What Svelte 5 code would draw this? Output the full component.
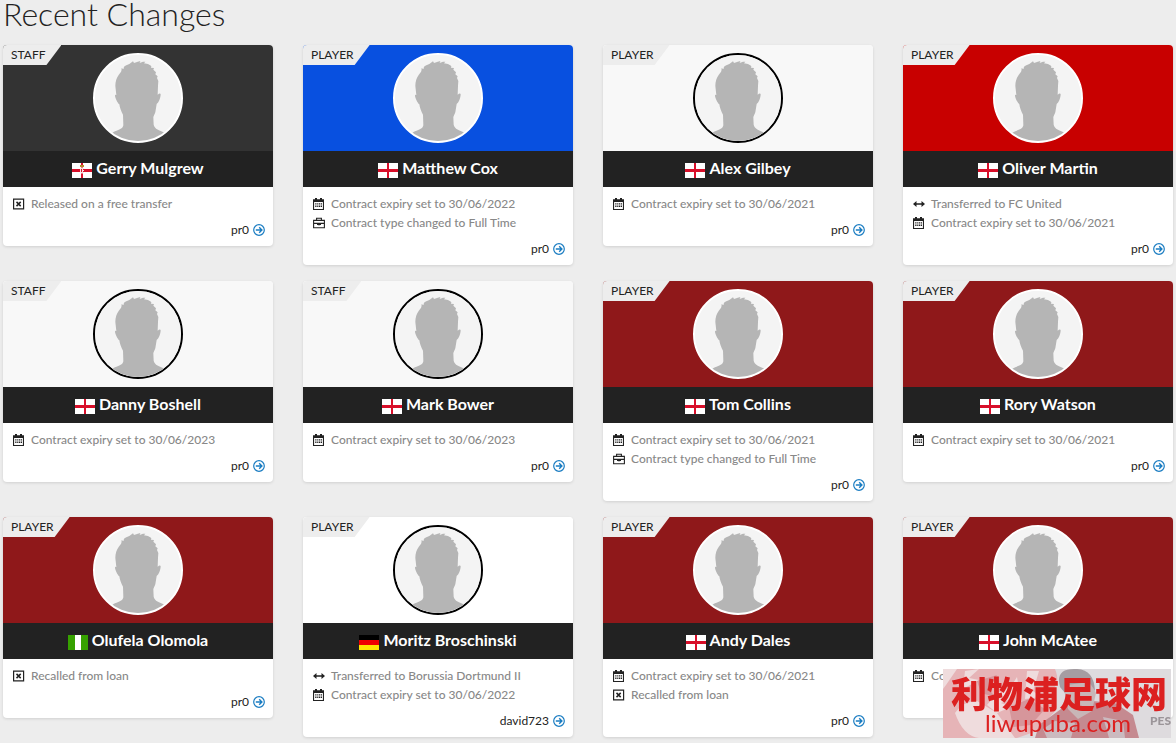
<script>
  const cards = [
    { role: 'Staff', name: 'Gerry Mulgrew', flag: 'nir', color: '#333333', user: 'pr0', changes: [['box', 'Released on a free transfer']] },
    { role: 'Player', name: 'Matthew Cox', flag: 'eng', color: '#0850e0', user: 'pr0', changes: [['calendar', 'Contract expiry set to 30/06/2022'], ['case', 'Contract type changed to Full Time']] },
    { role: 'Player', name: 'Alex Gilbey', flag: 'eng', color: '#f8f8f8', light: true, user: 'pr0', changes: [['calendar', 'Contract expiry set to 30/06/2021']] },
    { role: 'Player', name: 'Oliver Martin', flag: 'eng', color: '#c80000', user: 'pr0', changes: [['arrows', 'Transferred to FC United'], ['calendar', 'Contract expiry set to 30/06/2021']] },
    { role: 'Staff', name: 'Danny Boshell', flag: 'eng', color: '#f8f8f8', light: true, user: 'pr0', changes: [['calendar', 'Contract expiry set to 30/06/2023']] },
    { role: 'Staff', name: 'Mark Bower', flag: 'eng', color: '#f8f8f8', light: true, user: 'pr0', changes: [['calendar', 'Contract expiry set to 30/06/2023']] },
    { role: 'Player', name: 'Tom Collins', flag: 'eng', color: '#8f181a', user: 'pr0', changes: [['calendar', 'Contract expiry set to 30/06/2021'], ['case', 'Contract type changed to Full Time']] },
    { role: 'Player', name: 'Rory Watson', flag: 'eng', color: '#8f181a', user: 'pr0', changes: [['calendar', 'Contract expiry set to 30/06/2021']] },
    { role: 'Player', name: 'Olufela Olomola', flag: 'nga', color: '#8f181a', user: 'pr0', changes: [['box', 'Recalled from loan']] },
    { role: 'Player', name: 'Moritz Broschinski', flag: 'ger', color: '#ffffff', light: true, user: 'david723', changes: [['arrows', 'Transferred to Borussia Dortmund II'], ['calendar', 'Contract expiry set to 30/06/2022']] },
    { role: 'Player', name: 'Andy Dales', flag: 'eng', color: '#8f181a', user: 'pr0', changes: [['calendar', 'Contract expiry set to 30/06/2021'], ['box', 'Recalled from loan']] },
    { role: 'Player', name: 'John McAtee', flag: 'eng', color: '#8f181a', user: 'pr0', changes: [['calendar', 'Contract expiry set to 30/06/2021']] }
  ];
</script>

{#snippet flagIcon(kind)}
  <svg class="flag" viewBox="0 0 20 15" aria-hidden="true">
    {#if kind === 'ger'}
      <path fill="#000" d="M0 0h20v5H0z" /><path fill="#f00000" d="M0 5h20v5H0z" /><path fill="#ffe600" d="M0 10h20v5H0z" />
    {:else if kind === 'nga'}
      <path fill="#36a100" d="M0 0h20v15H0z" /><path fill="#fff" d="M7 0h6v15H7z" />
    {:else}
      <path fill="#fff" d="M0 0h20v15H0z" />
      <path fill="#d80f2a" d="M9 0h2v15H9zM0 6h20v3H0z" />
      {#if kind === 'nir'}
        <path fill="#f7dede" d="M10 4l2 2v3l-2 2-2-2V6z" />
        <path fill="#d80f2a" d="M9 6h1v3H9zM11 6h1v1h-1zM11 8h1v1h-1z" />
        <path fill="#b58a2c" d="M8 2h4v2H8z" />
      {/if}
    {/if}
  </svg>
{/snippet}

{#snippet changeIcon(kind)}
  <svg class="icon" viewBox="0 0 12 12" aria-hidden="true">
    {#if kind === 'box'}
      <path fill="none" stroke="#222" stroke-width="1.2" d="M.6 1.1h10v9.800H.6z" />
      <path fill="none" stroke="#222" stroke-width="1.5" d="M3.500 3.900l4.200 4.200M7.700 3.900L3.500 8.100" />
    {:else if kind === 'calendar'}
      <path fill="#222" fill-rule="evenodd" d="M2 0h2v1.200h3V0h2v1.200h2V12H0V1.200h2zM1.100 4.100v6.800h8.800V4.100z" />
      <path fill="#222" d="M2.200 5.200h1.300v1.400H2.200zM4.200 5.200h1.200v1.400H4.200zM6 5.200h1.200v1.400H6zM7.800 5.200H9v1.400H7.800zM2.200 7.600h1.300v1.300H2.200zM4.200 7.600h1.200v1.300H4.200zM6 7.600h1.200v1.300H6zM7.800 7.600H9v1.300H7.800z" />
    {:else if kind === 'case'}
      <path fill="none" stroke="#222" stroke-width="1.1" d="M3.600 3.200V1.200h4.800v2M.6 3.400h10.800v7.400H.6zM.6 6.400h10.800" />
      <path fill="#222" d="M4 6h4v1.200L7 8.200H5L4 7.200z" />
    {:else}
      <path fill="#222" d="M0 6l3.500-3v2.200h5V3L12 6 8.500 9V6.800h-5V9z" />
    {/if}
  </svg>
{/snippet}

<main>
  <h1>Recent Changes</h1>
  <div class="grid">
    {#each cards as card}
      <article class="card">
        <div class="banner" style="background-color: {card.color}">
          <span class="role">{card.role}</span>
          <svg class="avatar" class:dark={card.light} viewBox="6 6 258 258" aria-hidden="true">
            <circle cx="135" cy="135" r="134" fill="#f4f4f4" />
            <path fill="#b5b5b5" d="M58 239C76 230 89 229 91 217L90 185C85 177 80 163 79 154C73 149 66 133 66 128Q66 123 70 126L67 99C67 85 71 74 77 66C81 60 88 56 85 46L92 48C91 42 96 38 100 37L109 33L120 25L123 30L132 27L142 24L140 30L150 26L157 26L153 31L165 33L175 39L174 44L183 45L181 50L189 58L187 64L194 70L192 75L196 84L195 99L194 125Q202 118 203 124C203 134 197 150 191 153L187 178L181 192L182 215C185 229 199 231 214 239L190 260Q135 285 79 260Z" />
          </svg>
        </div>
        <h2>{@render flagIcon(card.flag)}{card.name}</h2>
        <div class="body">
          <ul>
            {#each card.changes as [icon, text]}
              <li>{@render changeIcon(icon)}<span>{text}</span></li>
            {/each}
          </ul>
          <a class="user" href="#changes">
            {card.user}
            <svg class="icon" viewBox="0 0 12 12" aria-hidden="true">
              <g fill="none" stroke="#1b7dc2" stroke-width="1.2"><circle cx="6" cy="6" r="5.3" /><path stroke-width="1.400" d="M2.800 6h6M6.200 3.300L8.900 6 6.200 8.700" /></g>
            </svg>
          </a>
        </div>
      </article>
    {/each}
  </div>
</main>

<a class="stamp" href="#home">
  <svg class="scene" viewBox="0 0 228 69" preserveAspectRatio="none" aria-hidden="true">
    <path fill="#dedbde" d="M0 0h228v69H0z" />
    <path fill="#e6b4b7" d="M0 0h112q6 14-4 22l6 18-20 22-20 7H0z" />
    <path fill="#efdcdd" d="M0 0h14L3 16l-3 4zM22 2l14-2-10 9 10 2-16 9zM12 44q8-12 22-12l20 12 10 14 8 11H36q-16-2-24-25zM54 24q14-4 20-16l2 12q-6 10-18 14l10 4-14 6-10-8zM84 2h12l-6 20 8 6-16 2z" />
    <path fill="#d6969b" d="M34 12l20-6-8 14 6 8-14-4zM66 38l20-8 16 10-14 16-18 2z" />
    <path fill="#c58a90" d="M96 56l22-16 20-9 34 3 18 12 6 23H92z" />
    <path fill="#c8b6b7" d="M120 16l26-4 7 12-4 18-14 8-10-10z" />
    <path fill="#a59da2" d="M117 18Q112 0 131 0q20-1 21 22l-6-9-22 3-2 8z" />
    <path fill="#cbbabf" d="M100 60l12-8 20 2-4 15h-24zM160 48l20 4 2 17h-16z" />
  </svg>
  <span class="title">利物浦足球网</span>
  <span class="domain">liwupuba.com</span>
  <span class="brand">PES</span>
</a>

<style>
  :global(body) { margin: 0; background: #ededed; }
  main, .stamp { font-family: Lato, "Liberation Sans", sans-serif; }
  main { padding: 0 3px 6px; color: #222; }
  h1 { margin: 0; height: 45px; font-size: 32px; line-height: 28px; font-weight: 300; }
  .grid { display: grid; grid-template-columns: repeat(4, minmax(0, 1fr)); gap: 16px 30px; align-items: start; }
  .card { background: #fff; border-radius: 4px; overflow: hidden; box-shadow: 0 1px 3px rgba(0, 0, 0, .12); }
  .banner { position: relative; display: flex; justify-content: center; padding: 8px 0; }
  .role { position: absolute; top: 0; left: 0; padding: 0 16px 0 8px; background: #ededed; clip-path: polygon(0 0, 100% 0, calc(100% - 15px) 100%, 0 100%); font-size: 12px; line-height: 20px; text-transform: uppercase; }
  .avatar { display: block; box-sizing: border-box; width: 90px; height: 90px; border: 2px solid #fff; border-radius: 50%; background: #f4f4f4; }
  .avatar.dark { border-color: #000; }
  h2 { display: flex; align-items: center; justify-content: center; gap: 4px; margin: 0; padding-bottom: 2px; background: #222; color: #fff; font-size: 16px; line-height: 34px; font-weight: 700; }
  .flag { width: 20px; height: 15px; margin-top: 5px; }
  .body { display: flex; flex-direction: column; padding: 7px 8px 7px 10px; }
  ul { list-style: none; margin: 0 0 8px; padding: 0; }
  li { display: flex; align-items: center; gap: 6px; color: #888; font-size: 12px; line-height: 19px; white-space: nowrap; font-weight: 500; }
  .icon { width: 12px; height: 12px; flex: none; }
  .user { display: flex; align-items: center; align-self: flex-end; gap: 4px; color: #222; font-size: 12px; line-height: 18px; text-decoration: none; }
  .stamp { position: fixed; right: 5px; bottom: 5px; box-sizing: border-box; width: 228px; height: 69px; padding-left: 8px; color: #dc2020; text-decoration: none; overflow: hidden; display: flex; flex-direction: column; align-items: flex-start; }
  .scene { position: absolute; inset: 0; width: 100%; height: 100%; }
  .title { position: relative; font: 900 36px/46px "Noto Sans CJK SC", sans-serif; white-space: nowrap; }
  .domain { position: relative; margin-left: 34px; font-size: 24px; line-height: 15px; }
  .brand { position: absolute; right: 0; bottom: 11px; color: #9b9599; font-size: 12px; line-height: 12px; font-weight: 900; }
</style>
